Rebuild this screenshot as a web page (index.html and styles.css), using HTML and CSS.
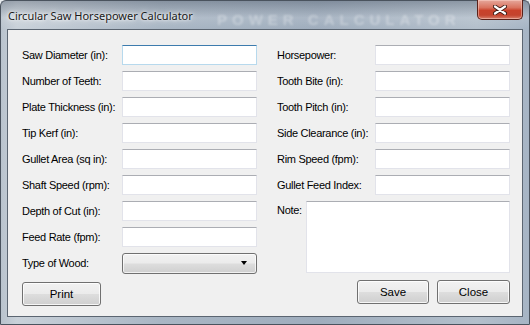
FILE: index.html
```html
<!DOCTYPE html>
<html>
	<head>
		<meta charset="UTF-8">
		<title>Circular Saw Horsepower Calculator</title>
		<link rel="stylesheet" href="styles.css">
	</head>
	<body>
		<div class="window">
			<div class="titlebar">
				<span class="caption">Circular Saw Horsepower Calculator</span>
				<span class="glass" aria-hidden="true">POWER CALCULATOR</span>
				<span class="close">
					<svg width="14" height="10" viewBox="0 0 14 10">
						<path d="M2 1.5 L12 8.5 M12 1.5 L2 8.5" stroke="#3b1a14" stroke-width="4" stroke-linecap="round"/>
						<path d="M2 1.5 L12 8.5 M12 1.5 L2 8.5" stroke="#fff" stroke-width="2.2" stroke-linecap="round"/>
					</svg>
				</span>
			</div>
			<div class="client">
				<div class="col left">
					<div class="row"><label>Saw Diameter (in):</label><input class="box focus" type="text"></div>
					<div class="row"><label>Number of Teeth:</label><input class="box" type="text"></div>
					<div class="row"><label>Plate Thickness (in):</label><input class="box" type="text"></div>
					<div class="row"><label>Tip Kerf (in):</label><input class="box" type="text"></div>
					<div class="row"><label>Gullet Area (sq in):</label><input class="box" type="text"></div>
					<div class="row"><label>Shaft Speed (rpm):</label><input class="box" type="text"></div>
					<div class="row"><label>Depth of Cut (in):</label><input class="box" type="text"></div>
					<div class="row"><label>Feed Rate (fpm):</label><input class="box" type="text"></div>
					<div class="row"><label>Type of Wood:</label><div class="combo"><span class="arrow"></span></div></div>
					<div class="buttons"><button class="btn print">Print</button></div>
				</div>
				<div class="col right">
					<div class="row"><label>Horsepower:</label><input class="box" type="text"></div>
					<div class="row"><label>Tooth Bite (in):</label><input class="box" type="text"></div>
					<div class="row"><label>Tooth Pitch (in):</label><input class="box" type="text"></div>
					<div class="row"><label>Side Clearance (in):</label><input class="box" type="text"></div>
					<div class="row"><label>Rim Speed (fpm):</label><input class="box" type="text"></div>
					<div class="row"><label>Gullet Feed Index:</label><input class="box" type="text"></div>
					<div class="note"><label>Note:</label><textarea class="box"></textarea></div>
					<div class="buttons end">
						<button class="btn save">Save</button>
						<button class="btn">Close</button>
					</div>
				</div>
			</div>
		</div>
	</body>
</html>
```
FILE: styles.css
```css
*{
	margin: 0;
	padding: 0;
	box-sizing: border-box;
}
body{
	width: 530px;
	height: 325px;
	overflow: hidden;
	background: #e8ecef;
	font-family: "Liberation Sans", Arial, sans-serif;
	font-size: 11px;
	letter-spacing: -0.3px;
	color: #000;
}
.window{
	width: 530px;
	height: 325px;
	display: flex;
	flex-direction: column;
	border: 1px solid #4a535e;
	border-radius: 6px 6px 0 0;
	background: linear-gradient(90deg, #b9c3cd 0%, #c9d1d9 3%, #a9b6c4 30%, #9fadbd 60%, #b3bfcb 90%, #a6b4c4 100%);
}
.titlebar{
	height: 28px;
	display: flex;
	align-items: flex-start;
	position: relative;
	padding-left: 7px;
	padding-right: 6px;
	background: linear-gradient(180deg, rgba(70,80,95,0.35) 0%, rgba(255,255,255,0.12) 60%, rgba(255,255,255,0) 100%);
}
.caption{
	padding-top: 7px;
	font-family: "Noto Sans", "Liberation Sans", sans-serif;
	font-size: 11px;
	letter-spacing: 0;
	color: #1a1a1a;
	text-shadow: 0 0 6px #fff, 0 0 3px #fff;
	position: relative;
	z-index: 1;
}
.glass{
	position: absolute;
	left: 216px;
	top: 10px;
	white-space: nowrap;
	font-family: "Liberation Sans", sans-serif;
	font-weight: bold;
	font-size: 15px;
	letter-spacing: 5px;
	color: rgba(255,255,255,0.3);
	filter: blur(1.2px);
}
.close{
	margin-left: auto;
	margin-top: -1px;
	width: 46px;
	height: 20px;
	display: flex;
	align-items: center;
	justify-content: center;
	border: 1px solid #5a2119;
	border-top: none;
	border-radius: 0 0 5px 5px;
	background: linear-gradient(180deg, #e6a89c 0%, #d9735f 40%, #c9422b 55%, #c4442e 80%, #d8806c 100%);
	box-shadow: inset 0 0 0 1px rgba(255,220,210,0.45);
	position: relative;
	z-index: 1;
}
.client{
	flex: 1;
	margin: 0 6px 7px 6px;
	border: 1px solid #5b6571;
	background: #f0f0f0;
	display: flex;
	gap: 20px;
	padding: 15px 0 0 14px;
}
.col{
	display: flex;
	flex-direction: column;
	gap: 6px;
	width: 235px;
}
.right{
	width: 233px;
}
.row{
	display: flex;
	align-items: center;
	height: 20px;
}
.row label{
	flex: 1;
	white-space: nowrap;
}
.box{
	width: 135px;
	height: 20px;
	background: #fff;
	border: 1px solid #e2e3ea;
	border-top-color: #abadb3;
	border-radius: 0;
	outline: none;
	font: inherit;
	resize: none;
}
.box.focus{
	border-color: #b7d9ed;
	border-top-color: #3d7bad;
}
.combo{
	width: 135px;
	height: 21px;
	border: 1px solid #707070;
	border-radius: 3px;
	background: linear-gradient(180deg, #f2f2f2 0%, #ebebeb 48%, #dddddd 52%, #cfcfcf 100%);
	box-shadow: inset 0 0 0 1px rgba(255,255,255,0.7);
	display: flex;
	align-items: center;
	justify-content: flex-end;
	padding-right: 9px;
}
.arrow{
	width: 0;
	height: 0;
	border-left: 3.5px solid transparent;
	border-right: 3.5px solid transparent;
	border-top: 4px solid #000;
}
.note{
	display: flex;
	height: 72px;
}
.note label{
	width: 29px;
	padding-top: 3px;
}
.note .box{
	flex: 1;
	width: auto;
	height: 72px;
}
.buttons{
	display: flex;
	gap: 8px;
	margin-top: 3px;
}
.buttons.end{
	justify-content: flex-end;
	margin-top: 1px;
}
.btn{
	width: 73px;
	height: 24px;
	font: inherit;
	font-size: 11.5px;
	color: #000;
	border: 1px solid #707070;
	border-radius: 3px;
	background: linear-gradient(180deg, #f2f2f2 0%, #ebebeb 48%, #dddddd 52%, #cfcfcf 100%);
	box-shadow: inset 0 0 0 1px rgba(255,255,255,0.8);
}
.btn.print{
	width: 79px;
}
.btn.save{
	width: 72px;
}
```
